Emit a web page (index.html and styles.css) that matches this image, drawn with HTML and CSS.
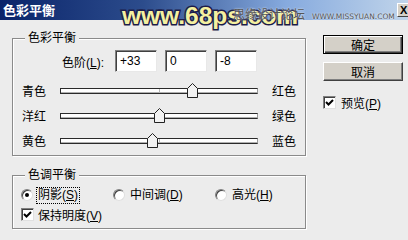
FILE: index.html
```html
<!DOCTYPE html>
<html>
<head>
	<title>色彩平衡</title>
	<meta charset="utf-8">
	<link rel="stylesheet" href="styles.css">
</head>
<body>
	<div class="titlebar">
		<span class="title">色彩平衡</span>
		<span class="close">X</span>
	</div>

	<div class="content">
		<div class="left">
			<div class="group balance">
				<span class="legend">色彩平衡</span>
				<div class="levels">
					<label>色阶(<u>L</u>):</label>
					<span class="field">+33</span>
					<span class="field">0</span>
					<span class="field">-8</span>
				</div>
				<div class="sliders">
					<div class="slider-row">
						<span class="lbl">青色</span>
						<div class="track"><svg class="thumb" style="left:126px" width="11" height="15"><path d="M0.5 14.5 V5.5 L5.5 0.5 L10.5 5.5 V14.5 Z"/></svg></div>
						<span class="lbl">红色</span>
					</div>
					<div class="slider-row">
						<span class="lbl">洋红</span>
						<div class="track"><svg class="thumb" style="left:93px" width="11" height="15"><path d="M0.5 14.5 V5.5 L5.5 0.5 L10.5 5.5 V14.5 Z"/></svg></div>
						<span class="lbl">绿色</span>
					</div>
					<div class="slider-row">
						<span class="lbl">黄色</span>
						<div class="track"><svg class="thumb" style="left:86px" width="11" height="15"><path d="M0.5 14.5 V5.5 L5.5 0.5 L10.5 5.5 V14.5 Z"/></svg></div>
						<span class="lbl">蓝色</span>
					</div>
				</div>
			</div>

			<div class="group tone">
				<span class="legend">色调平衡</span>
				<div class="radios">
					<div class="opt first"><span class="radio on"></span><span class="opt-text focus">阴影(<u>S</u>)</span></div>
					<div class="opt second"><span class="radio"></span><span class="opt-text">中间调(<u>D</u>)</span></div>
					<div class="opt"><span class="radio"></span><span class="opt-text">高光(<u>H</u>)</span></div>
				</div>
				<div class="check-row">
					<span class="checkbox"><svg width="9" height="9"><path d="M1 4 L3.5 6.5 L8 2"/></svg></span>
					<span class="check-text">保持明度(<u>V</u>)</span>
				</div>
			</div>
		</div>

		<div class="right">
			<div class="btn default">确定</div>
			<div class="btn">取消</div>
			<div class="preview">
				<span class="checkbox"><svg width="9" height="9"><path d="M1 4 L3.5 6.5 L8 2"/></svg></span>
				<span class="check-text">预览(<u>P</u>)</span>
			</div>
		</div>
	</div>

	<div class="wm-68">www.68ps.com</div>
	<div class="wm-missyuan"><span class="wm-cn">思缘设计论坛</span><span class="wm-en">WWW.MISSYUAN.COM</span></div>
</body>
</html>
```

FILE: styles.css
```css
body{
	margin:0;
	width:408px;
	height:240px;
	overflow:hidden;
	position:relative;
	background:#ececec;
	color:#000;
	font-family:"Liberation Sans","Noto Sans CJK SC",sans-serif;
	font-size:12px;
}

u{
	text-decoration:underline;
	text-underline-offset:1px;
}

.titlebar{
	height:20px;
	display:flex;
	align-items:center;
	justify-content:space-between;
	padding-left:3px;
	background:linear-gradient(to right,#0a246a,#2c4c8c 35%,#86aade 70%,#c0d4ea);
}

.title{
	color:#fff;
	font-family:"Noto Sans CJK SC",sans-serif;
	font-weight:bold;
	font-size:13px;
	line-height:16px;
}

.close{
	box-sizing:border-box;
	width:16px;
	height:14px;
	margin-right:-5px;
	background:#d4d0c8;
	border:1px solid;
	border-color:#fff #404040 #404040 #fff;
	font-weight:bold;
	font-size:11px;
	line-height:12px;
	padding-left:2px;
}

.content{
	display:flex;
	padding-left:12px;
}

.left{
	width:294px;
	padding-top:18px;
}

.group{
	position:relative;
	border:1px solid #8a8a8a;
	box-shadow:inset 1px 1px #fff,1px 1px #fff;
}

.legend{
	position:absolute;
	top:-8px;
	left:12px;
	padding:0 3px;
	background:#ececec;
	line-height:14px;
}

.balance{
	padding:11px 0 2px;
}

.levels{
	display:flex;
	align-items:center;
	height:22px;
	padding-left:49px;
}

.levels label{
	width:53px;
}

.field{
	box-sizing:border-box;
	width:42px;
	height:22px;
	margin-right:8px;
	padding-left:4px;
	line-height:20px;
	background:#fff;
	border:1px solid;
	border-color:#808080 #e8e8e8 #e8e8e8 #808080;
	box-shadow:inset 1px 1px #404040;
}

.sliders{
	margin-top:6px;
}

.slider-row{
	display:flex;
	align-items:center;
	height:25px;
	padding-left:9px;
}

.slider-row .lbl{
	width:24px;
}

.track{
	position:relative;
	box-sizing:border-box;
	width:198px;
	height:6px;
	margin:0 14px;
	background:#fff;
	border:1px solid;
	border-color:#2a2a2a #999 #2a2a2a #2a2a2a;
	box-shadow:inset 0 -1px #b0b0b0;
}

.track::after{
	content:"";
	position:absolute;
	left:98px;
	top:0;
	bottom:0;
	width:1px;
	background:#b8b8b8;
}

.thumb{
	position:absolute;
	top:-6px;
	z-index:1;
}

.thumb path{
	fill:#f2f2f2;
	stroke:#222;
	stroke-width:1;
}

.tone{
	margin-top:19px;
	padding:10px 0 5px 8px;
}

.radios{
	display:flex;
	align-items:center;
	height:18px;
}

.opt{
	display:flex;
	align-items:center;
}

.opt.first{
	width:92px;
}

.opt.second{
	width:102px;
}

.radio{
	position:relative;
	box-sizing:border-box;
	width:12px;
	height:12px;
	margin-right:4px;
	border-radius:50%;
	background:#fff;
	border:1px solid;
	border-color:#808080 #e0e0e0 #e0e0e0 #808080;
	box-shadow:inset 1px 1px #404040;
}

.radio.on::after{
	content:"";
	position:absolute;
	left:3px;
	top:3px;
	width:4px;
	height:4px;
	border-radius:50%;
	background:#000;
}

.opt-text{
	padding:0 1px;
	line-height:15px;
}

.focus{
	outline:1px dotted #000;
}

.check-row{
	display:flex;
	align-items:center;
	height:18px;
	margin-top:1px;
}

.checkbox{
	box-sizing:border-box;
	width:13px;
	height:13px;
	display:flex;
	align-items:center;
	justify-content:center;
	background:#fff;
	border:1px solid;
	border-color:#808080 #e0e0e0 #e0e0e0 #808080;
	box-shadow:inset 1px 1px #404040;
}

.checkbox path{
	fill:none;
	stroke:#000;
	stroke-width:2;
}

.check-text{
	margin-left:4px;
}

.right{
	width:80px;
	margin-left:17px;
	padding-top:15px;
	display:flex;
	flex-direction:column;
}

.btn{
	box-sizing:border-box;
	height:19px;
	display:flex;
	align-items:center;
	justify-content:center;
	background:#d4d0c8;
	border:1px solid;
	border-color:#fff #404040 #404040 #fff;
	box-shadow:inset -1px -1px #808080;
}

.btn.default{
	border-color:#000;
	box-shadow:inset 1px 1px #fff,inset -1px -1px #404040,inset -2px -2px #808080;
}

.btn + .btn{
	margin-top:8px;
}

.preview{
	display:flex;
	align-items:center;
	height:13px;
	margin-top:15px;
}

.preview .check-text{
	margin-left:5px;
}

/* watermarks on top of the screenshot */
.wm-68{
	position:absolute;
	left:122px;
	top:4px;
	white-space:nowrap;
	font-family:"Liberation Sans",sans-serif;
	font-weight:bold;
	font-size:24.5px;
	line-height:24px;
	color:#f4f0a0;
	-webkit-text-stroke:3px #1c1c4a;
	paint-order:stroke fill;
}

.wm-missyuan{
	position:absolute;
	left:233px;
	top:6px;
	display:flex;
	align-items:baseline;
	white-space:nowrap;
	color:#555;
	text-shadow:0 0 2px #fff;
}

.wm-cn{
	font-family:"Noto Sans CJK SC",sans-serif;
	font-size:12px;
	line-height:15px;
	margin-right:7px;
}

.wm-en{
	font-family:"DejaVu Sans",sans-serif;
	font-size:7.5px;
}
```
